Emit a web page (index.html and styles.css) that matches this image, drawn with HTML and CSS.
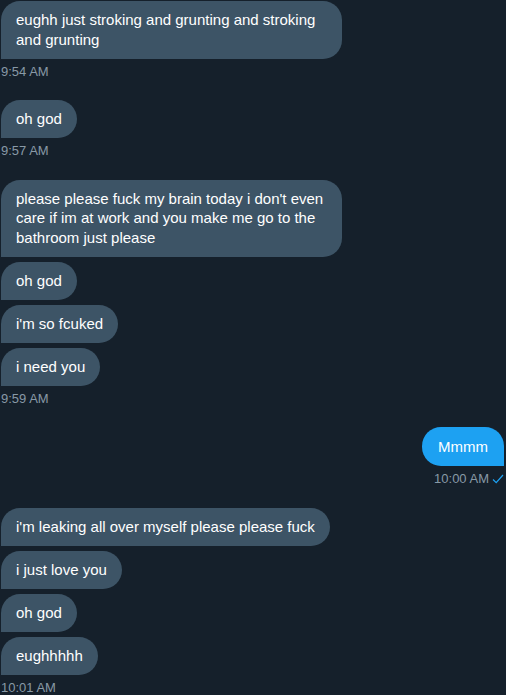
FILE: index.html
```html
<!DOCTYPE html>
<html lang="en">
<head>
  <meta charset="UTF-8">
  <title>Messages</title>
  <link rel="stylesheet" href="styles.css">
</head>
<body>

  <div class="chat">

    <div class="group">
      <div class="bubble">eughh just stroking and grunting and stroking and grunting</div>
      <div class="time">9:54 AM</div>
    </div>

    <div class="group">
      <div class="bubble">oh god</div>
      <div class="time">9:57 AM</div>
    </div>

    <div class="group">
      <div class="bubble">please please fuck my brain today i don't even care if im at work and you make me go to the bathroom just please</div>
      <div class="bubble">oh god</div>
      <div class="bubble">i'm so fcuked</div>
      <div class="bubble">i need you</div>
      <div class="time">9:59 AM</div>
    </div>

    <div class="group sent">
      <div class="bubble">Mmmm</div>
      <div class="time">10:00 AM
        <svg class="check" width="12" height="10" viewBox="0 0 12 10">
          <path d="M1 5.5 L4.2 8.6 L11 1" fill="none" stroke="#1da1f2" stroke-width="1.2"/>
        </svg>
      </div>
    </div>

    <div class="group">
      <div class="bubble">i'm leaking all over myself please please fuck</div>
      <div class="bubble">i just love you</div>
      <div class="bubble">oh god</div>
      <div class="bubble">eughhhhh</div>
      <div class="time">10:01 AM</div>
    </div>

  </div>

</body>
</html>
```

FILE: styles.css
```css
body {
  margin: 0;
  background-color: #15202b;
  font-family: 'Liberation Sans', Arial, sans-serif;
  color: #ffffff;
}

.chat {
  padding: 1px 2px 0 1px;
}

.group {
  display: flex;
  flex-direction: column;
  align-items: flex-start;
  gap: 5px;
  margin-bottom: 20.5px;
}

.bubble {
  max-width: 311px;
  padding: 9.25px 15px;
  background-color: #3d5466;
  border-radius: 19px 19px 19px 0;
  font-size: 15px;
  line-height: 19.5px;
}

.time {
  display: flex;
  align-items: center;
  gap: 3px;
  font-size: 13px;
  line-height: 16px;
  color: #8899a6;
}

.sent {
  align-items: flex-end;
}

.sent .bubble {
  padding: 9.75px 16px;
  background-color: #1da1f2;
  border-radius: 19px 19px 0 19px;
}

.check {
  margin-top: -1px;
}
```
